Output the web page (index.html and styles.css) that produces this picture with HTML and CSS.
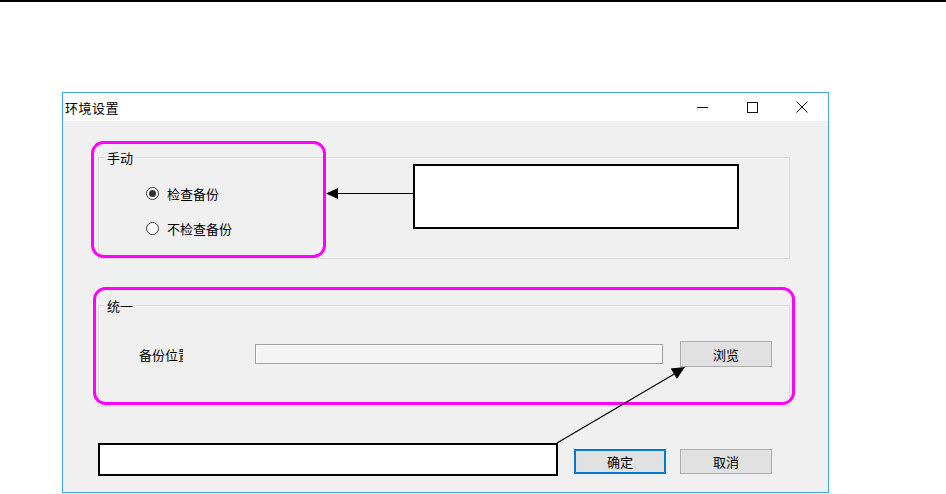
FILE: index.html
```
<!DOCTYPE html>
<html lang="zh-CN">
<head>
  <meta charset="utf-8" />
  <title>环境设置</title>
  <link rel="stylesheet" href="styles.css">
</head>
<body>
  <div class="topline"></div>

  <div class="window">
    <div class="titlebar">
      <span class="title">环境设置</span>
      <div class="controls">
        <span class="ctl">
          <svg width="11" height="11" viewBox="0 0 11 11"><path d="M0 5.5h11" stroke="#111" stroke-width="1"/></svg>
        </span>
        <span class="ctl">
          <svg width="11" height="11" viewBox="0 0 11 11"><rect x="0.5" y="0.5" width="10" height="10" fill="none" stroke="#111" stroke-width="1"/></svg>
        </span>
        <span class="ctl">
          <svg width="12" height="12" viewBox="0 0 12 12"><path d="M0.5 0.5L11.5 11.5M11.5 0.5L0.5 11.5" stroke="#111" stroke-width="1"/></svg>
        </span>
      </div>
    </div>

    <div class="content">
      <fieldset class="group group-manual">
        <legend>手动</legend>
        <label class="radio-row">
          <span class="radio checked"></span>
          <span>检查备份</span>
        </label>
        <label class="radio-row">
          <span class="radio"></span>
          <span>不检查备份</span>
        </label>
      </fieldset>

      <fieldset class="group group-unified">
        <legend>统一</legend>
        <div class="path-row">
          <span class="path-label">备份位置</span>
          <div class="path-input"></div>
          <button class="btn">浏览</button>
        </div>
      </fieldset>

      <div class="actions">
        <button class="btn btn-default">确定</button>
        <button class="btn">取消</button>
      </div>
    </div>
  </div>

  <!-- annotation layer -->
  <svg class="notes" width="946" height="494" viewBox="0 0 946 494">
    <rect x="92.5" y="142.5" width="232" height="114" rx="11" fill="none" stroke="#ff00ff" stroke-width="3"/>
    <rect x="94.5" y="288.5" width="699" height="115" rx="11" fill="none" stroke="#ff00ff" stroke-width="3"/>

    <rect x="414" y="165" width="324" height="63" fill="#fff" stroke="#000" stroke-width="2"/>
    <path d="M414 193.5H336" stroke="#000" stroke-width="1.2"/>
    <path d="M326 193.5L338 188L338 199Z" fill="#000"/>

    <rect x="99" y="444" width="458" height="31" fill="#fff" stroke="#000" stroke-width="2"/>
    <path d="M557 443L676 373" stroke="#000" stroke-width="1.2"/>
    <path d="M685 367L670.7 368.5L676.9 378.8Z" fill="#000"/>
  </svg>
</body>
</html>
```

FILE: styles.css
```
/* Base */
body {
  margin: 0;
  background: #fff;
  font-family: "Noto Sans CJK SC", "Liberation Sans", sans-serif;
  font-size: 13px;
  color: #000;
  position: relative;
  width: 946px;
  height: 494px;
  overflow: hidden;
}

.topline {
  height: 2px;
  background: #000;
}

/* Dialog window */
.window {
  box-sizing: border-box;
  width: 767px;
  height: 401px;
  margin: 90px 0 0 62px;
  border: 1px solid #41a5ee;
  background: #f0f0f0;
  display: flex;
  flex-direction: column;
}

.titlebar {
  height: 28px;
  background: #fff;
  display: flex;
  align-items: center;
  justify-content: space-between;
  padding-right: 1px;
}

.title {
  padding-left: 2px;
  font-size: 13px;
  line-height: 17px;
  letter-spacing: 0.5px;
}

.controls {
  display: flex;
  height: 100%;
}

.ctl {
  width: 50px;
  display: flex;
  align-items: center;
  justify-content: center;
}

.content {
  flex: 1;
  padding: 0 38px 0 35px;
}

/* Group boxes */
.group {
  margin: 0;
  border: 1px solid #dcdcdc;
  min-width: 0;
}

.group legend {
  margin-left: 6px;
  padding: 0 2px;
  line-height: 17px;
}

.group-manual {
  margin-top: 28px;
  padding: 17px 0 20px 0;
}

.radio-row {
  display: flex;
  align-items: center;
  height: 20px;
  gap: 8px;
  margin-left: 47px;
}

.radio-row + .radio-row {
  margin-top: 15px;
}

.radio {
  box-sizing: border-box;
  width: 13px;
  height: 13px;
  border: 1px solid #333;
  border-radius: 50%;
  background: #fff;
  display: flex;
  align-items: center;
  justify-content: center;
}

.radio.checked::after {
  content: "";
  width: 7px;
  height: 7px;
  border-radius: 50%;
  background: #333;
}

.group-unified {
  margin-top: 38px;
  padding: 27px 0 39px 0;
}

.path-row {
  display: flex;
  align-items: center;
  height: 26px;
  padding-left: 40px;
}

.path-label {
  width: 44px;
  overflow: hidden;
  white-space: nowrap;
  margin-right: 72px;
}

.path-input {
  box-sizing: border-box;
  width: 408px;
  height: 20px;
  border: 1px solid #a0a0a0;
  background: #f4f4f4;
  box-shadow: inset 1px 1px #fff;
  margin-right: 17px;
}

/* Buttons */
.btn {
  box-sizing: border-box;
  width: 92px;
  height: 26px;
  border: 1px solid #adadad;
  background: #e1e1e1;
  font-family: inherit;
  font-size: 13px;
  color: #000;
  padding: 0;
}

.actions {
  display: flex;
  justify-content: flex-end;
  gap: 14px;
  margin-top: 42px;
  padding-right: 18px;
}

.actions .btn {
  height: 25px;
}

.btn-default {
  border: 2px solid #0078d7;
}

/* Annotation overlay */
.notes {
  position: absolute;
  left: 0;
  top: 0;
  pointer-events: none;
}
```
